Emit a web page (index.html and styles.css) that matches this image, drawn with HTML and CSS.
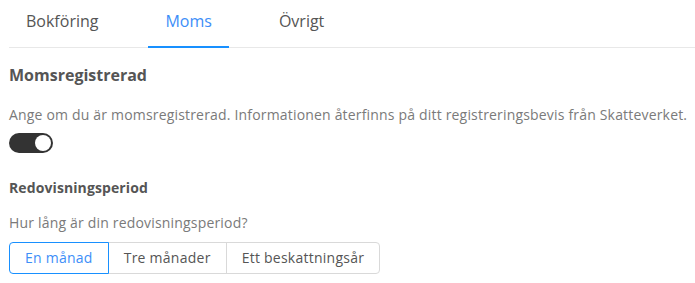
FILE: index.html
```html
<!DOCTYPE html>
<html lang="sv">
<head>
  <meta charset="UTF-8" />
  <meta name="viewport" content="width=device-width, initial-scale=1.0" />
  <title>Inställningar</title>
  <link rel="stylesheet" href="styles.css">
</head>
<body>
  <div class="tabs">
    <div class="tab">Bokföring</div>
    <div class="tab active">Moms</div>
    <div class="tab">Övrigt</div>
  </div>
  <div class="content">
    <h2 class="title">Momsregistrerad</h2>
    <p class="help">Ange om du är momsregistrerad. Informationen återfinns på ditt registreringsbevis från Skatteverket.</p>
    <div class="switch on"></div>
    <h3 class="subtitle">Redovisningsperiod</h3>
    <p class="help tight">Hur lång är din redovisningsperiod?</p>
    <div class="btn-group">
      <div class="btn selected">En månad</div>
      <div class="btn">Tre månader</div>
      <div class="btn">Ett beskattningsår</div>
    </div>
  </div>
</body>
</html>
```

FILE: styles.css
```css
* {
  box-sizing: border-box;
}
body {
  margin: 0;
  padding-left: 9px;
  font-family: "Open Sans", "Liberation Sans", sans-serif;
  background: #fff;
  color: #555;
}
.tabs {
  display: flex;
  border-bottom: 1px solid #e8e8e8;
  height: 48px;
}
.tab {
  font-size: 16px;
  line-height: 24px;
  padding: 9px 17px 0;
  margin-right: 33px;
  color: #555;
  border-bottom: 2px solid transparent;
  margin-bottom: -1px;
}
.tab.active {
  color: #3d8ef8;
  border-bottom-color: #1890ff;
}
.content {
  display: flex;
  flex-direction: column;
  align-items: flex-start;
}
.title {
  margin: 15px 0 0;
  font-size: 16px;
  line-height: 24px;
  font-weight: bold;
  color: #555;
}
.subtitle {
  margin: 24px 0 0;
  font-size: 14px;
  line-height: 21px;
  font-weight: bold;
  letter-spacing: 0.1px;
  color: #555;
}
.help {
  margin: 17px 0 0;
  font-size: 14px;
  line-height: 21px;
  letter-spacing: 0.18px;
  color: #7a7a7a;
}
.help.tight {
  margin-top: 14px;
}
.switch {
  position: relative;
  width: 44px;
  height: 20px;
  margin-top: 8px;
  border-radius: 10px;
  background: #333;
}
.switch::after {
  content: "";
  position: absolute;
  top: 2px;
  right: 2px;
  width: 16px;
  height: 16px;
  border-radius: 50%;
  background: #fff;
}
.btn-group {
  display: flex;
  margin-top: 9px;
}
.btn {
  height: 32px;
  line-height: 30px;
  padding: 0 15px;
  font-size: 14px;
  letter-spacing: 0.25px;
  color: #555;
  border: 1px solid #d9d9d9;
  margin-left: -1px;
}
.btn:first-child {
  margin-left: 0;
  border-radius: 4px 0 0 4px;
}
.btn:last-child {
  border-radius: 0 4px 4px 0;
}
.btn.selected {
  position: relative;
  z-index: 1;
  color: #3d8ef8;
  border-color: #1890ff;
}
```
